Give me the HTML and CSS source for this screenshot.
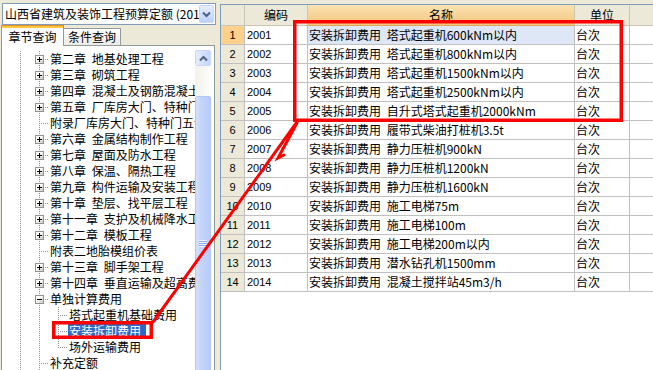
FILE: index.html
```html
<!DOCTYPE html>
<html lang="zh">
<head>
<meta charset="utf-8">
<title>预算定额</title>
<link rel="stylesheet" href="styles.css">
</head>
<body>
<div class="app">
  <aside class="left">
    <div class="combo">
      <span class="combo-text">山西省建筑及装饰工程预算定额 (2011)</span>
      <span class="combo-btn"><svg width="9" height="7" viewBox="0 0 9 7"><path d="M1 1.5 L4.5 5 L8 1.5" fill="none" stroke="#4D6185" stroke-width="2"/></svg></span>
    </div>
    <div class="tabs">
      <div class="tab active">章节查询</div>
      <div class="tab">条件查询</div>
      <div class="tab-fill"></div>
    </div>
    <div class="tabpage">
      <div class="tree">
        <div class="node"><span class="pad"></span><span class="g v"></span><span class="g tee"><span class="box plus"></span></span><span class="label">第二章 地基处理工程</span></div>
        <div class="node"><span class="pad"></span><span class="g v"></span><span class="g tee"><span class="box plus"></span></span><span class="label">第三章 砌筑工程</span></div>
        <div class="node"><span class="pad"></span><span class="g v"></span><span class="g tee"><span class="box plus"></span></span><span class="label">第四章 混凝土及钢筋混凝土工程</span></div>
        <div class="node"><span class="pad"></span><span class="g v"></span><span class="g tee"><span class="box plus"></span></span><span class="label">第五章 厂库房大门、特种门、木结构工程</span></div>
        <div class="node"><span class="pad"></span><span class="g v"></span><span class="g tee"></span><span class="label">附录厂库房大门、特种门五金表</span></div>
        <div class="node"><span class="pad"></span><span class="g v"></span><span class="g tee"><span class="box plus"></span></span><span class="label">第六章 金属结构制作工程</span></div>
        <div class="node"><span class="pad"></span><span class="g v"></span><span class="g tee"><span class="box plus"></span></span><span class="label">第七章 屋面及防水工程</span></div>
        <div class="node"><span class="pad"></span><span class="g v"></span><span class="g tee"><span class="box plus"></span></span><span class="label">第八章 保温、隔热工程</span></div>
        <div class="node"><span class="pad"></span><span class="g v"></span><span class="g tee"><span class="box plus"></span></span><span class="label">第九章 构件运输及安装工程</span></div>
        <div class="node"><span class="pad"></span><span class="g v"></span><span class="g tee"><span class="box plus"></span></span><span class="label">第十章 垫层、找平层工程</span></div>
        <div class="node"><span class="pad"></span><span class="g v"></span><span class="g tee"><span class="box plus"></span></span><span class="label">第十一章 支护及机械降水工程</span></div>
        <div class="node"><span class="pad"></span><span class="g v"></span><span class="g tee"><span class="box plus"></span></span><span class="label">第十二章 模板工程</span></div>
        <div class="node"><span class="pad"></span><span class="g v"></span><span class="g tee"></span><span class="label">附表二地胎模组价表</span></div>
        <div class="node"><span class="pad"></span><span class="g v"></span><span class="g tee"><span class="box plus"></span></span><span class="label">第十三章 脚手架工程</span></div>
        <div class="node"><span class="pad"></span><span class="g v"></span><span class="g tee"><span class="box plus"></span></span><span class="label">第十四章 垂直运输及超高费</span></div>
        <div class="node"><span class="pad"></span><span class="g v"></span><span class="g tee"><span class="box minus"></span></span><span class="label">单独计算费用</span></div>
        <div class="node"><span class="pad"></span><span class="g v"></span><span class="g v"></span><span class="g tee"></span><span class="label">塔式起重机基础费用</span></div>
        <div class="node"><span class="pad"></span><span class="g v"></span><span class="g v"></span><span class="g tee"></span><span class="label sel">安装拆卸费用</span></div>
        <div class="node"><span class="pad"></span><span class="g v"></span><span class="g v"></span><span class="g ell"></span><span class="label">场外运输费用</span></div>
        <div class="node"><span class="pad"></span><span class="g v"></span><span class="g tee"></span><span class="label">补充定额</span></div>
      </div>
      <div class="vscroll">
        <div class="sb-up"><svg width="9" height="7" viewBox="0 0 9 7"><path d="M1 5.5 L4.5 2 L8 5.5" fill="none" stroke="#4D6185" stroke-width="2"/></svg></div>
        <div class="sb-track"></div>
        <div class="sb-thumb"><span class="grip"></span></div>
      </div>
    </div>
  </aside>
  <div class="splitter"></div>
  <section class="grid">
    <div class="row head">
      <div class="c num"></div><div class="c code">编码</div><div class="c name sortcol">名称</div><div class="c unit">单位</div><div class="c rest"></div>
    </div>
    <div class="row"><div class="c num cur">1</div><div class="c code">2001</div><div class="c name curcell">安装拆卸费用 塔式起重机600kNm以内</div><div class="c unit">台次</div><div class="c rest"></div></div>
    <div class="row"><div class="c num">2</div><div class="c code">2002</div><div class="c name">安装拆卸费用 塔式起重机800kNm以内</div><div class="c unit">台次</div><div class="c rest"></div></div>
    <div class="row"><div class="c num">3</div><div class="c code">2003</div><div class="c name">安装拆卸费用 塔式起重机1500kNm以内</div><div class="c unit">台次</div><div class="c rest"></div></div>
    <div class="row"><div class="c num">4</div><div class="c code">2004</div><div class="c name">安装拆卸费用 塔式起重机2500kNm以内</div><div class="c unit">台次</div><div class="c rest"></div></div>
    <div class="row"><div class="c num">5</div><div class="c code">2005</div><div class="c name">安装拆卸费用 自升式塔式起重机2000kNm</div><div class="c unit">台次</div><div class="c rest"></div></div>
    <div class="row"><div class="c num">6</div><div class="c code">2006</div><div class="c name">安装拆卸费用 履带式柴油打桩机3.5t</div><div class="c unit">台次</div><div class="c rest"></div></div>
    <div class="row"><div class="c num">7</div><div class="c code">2007</div><div class="c name">安装拆卸费用 静力压桩机900kN</div><div class="c unit">台次</div><div class="c rest"></div></div>
    <div class="row"><div class="c num">8</div><div class="c code">2008</div><div class="c name">安装拆卸费用 静力压桩机1200kN</div><div class="c unit">台次</div><div class="c rest"></div></div>
    <div class="row"><div class="c num">9</div><div class="c code">2009</div><div class="c name">安装拆卸费用 静力压桩机1600kN</div><div class="c unit">台次</div><div class="c rest"></div></div>
    <div class="row"><div class="c num">10</div><div class="c code">2010</div><div class="c name">安装拆卸费用 施工电梯75m</div><div class="c unit">台次</div><div class="c rest"></div></div>
    <div class="row"><div class="c num">11</div><div class="c code">2011</div><div class="c name">安装拆卸费用 施工电梯100m</div><div class="c unit">台次</div><div class="c rest"></div></div>
    <div class="row"><div class="c num">12</div><div class="c code">2012</div><div class="c name">安装拆卸费用 施工电梯200m以内</div><div class="c unit">台次</div><div class="c rest"></div></div>
    <div class="row"><div class="c num">13</div><div class="c code">2013</div><div class="c name">安装拆卸费用 潜水钻孔机1500mm</div><div class="c unit">台次</div><div class="c rest"></div></div>
    <div class="row"><div class="c num">14</div><div class="c code">2014</div><div class="c name">安装拆卸费用 混凝土搅拌站45m3/h</div><div class="c unit">台次</div><div class="c rest"></div></div>
  </section>
</div>
<svg class="marks" width="653" height="370" viewBox="0 0 653 370">
  <g fill="none" stroke="#ff0000" stroke-width="3.5">
    <rect x="294.75" y="21.75" width="326.5" height="98.5"/>
    <rect x="53.75" y="322.75" width="97.5" height="14.5"/>
  </g>
  <g fill="none" stroke="#ff0000" stroke-width="3" stroke-linecap="round">
    <path d="M153 322 L297 122"/>
    <path d="M297 123 L278 158 L284 155"/>
  </g>
</svg>
</body>
</html>
```
FILE: styles.css
```css
html, body {
  margin: 0;
  padding: 0;
}
body {
  width: 653px;
  height: 370px;
  overflow: hidden;
  position: relative;
  background: #ECE9D8;
  font-family: "Noto Sans CJK SC", "Noto Sans", sans-serif;
  font-size: 12px;
  color: #000;
}
.app {
  display: flex;
  height: 370px;
}

/* ---------- left panel ---------- */
.left {
  width: 216px;
  flex: none;
  display: flex;
  flex-direction: column;
  padding-top: 3px;
  box-sizing: border-box;
}
.combo {
  margin-left: 2px;
  width: 214px;
  height: 22px;
  box-sizing: border-box;
  border: 1px solid #7F9DB9;
  background: #fff;
  padding: 1px;
  display: flex;
  align-items: center;
}
.combo-text {
  flex: 1;
  min-width: 0;
  overflow: hidden;
  white-space: nowrap;
  padding-left: 1px;
  line-height: 18px;
}
.combo-btn {
  width: 15px;
  height: 18px;
  flex: none;
  box-sizing: border-box;
  border: 1px solid #C3D3FD;
  border-radius: 2px;
  background: linear-gradient(to bottom, #E6EEFF, #BCD0FA);
  display: flex;
  align-items: center;
  justify-content: center;
}
.tabs {
  display: flex;
  align-items: flex-end;
  height: 21px;
  margin-left: 1px;
  width: 214px;
}
.tab {
  box-sizing: border-box;
  text-align: center;
  white-space: nowrap;
  flex: none;
}
.tab.active {
  width: 63px;
  height: 21px;
  border: 1px solid #919B9C;
  border-bottom: none;
  border-top: 1px solid #E68B2C;
  box-shadow: inset 0 2px 0 #FFC83C;
  background: #FCFCFE;
  padding-top: 2px;
  line-height: 17px;
}
.tab:not(.active) {
  width: 57px;
  height: 18px;
  border: 1px solid #919B9C;
  border-left: none;
  background: linear-gradient(to bottom, #FFFFFF, #ECEBE6);
  line-height: 16px;
}
.tab-fill {
  flex: 1;
  border-bottom: 1px solid #919B9C;
}
.tabpage {
  flex: 1;
  min-height: 0;
  margin-left: 1px;
  width: 214px;
  box-sizing: border-box;
  border-left: 1px solid #919B9C;
  border-right: 1px solid #919B9C;
  background: #fff;
  padding: 4px 3px 0 1px;
  display: flex;
  overflow: hidden;
}
.tree {
  flex: 1;
  min-width: 0;
  overflow: hidden;
  padding-top: 1px;
}
.node {
  display: flex;
  height: 16px;
  white-space: nowrap;
}
.pad {
  width: 8px;
  flex: none;
}
.g {
  width: 19px;
  height: 16px;
  flex: none;
}
.v {
  background: repeating-linear-gradient(to bottom, #8C8C8C 0 1px, transparent 1px 2px) 9px 0 / 1px 16px no-repeat;
}
.tee {
  background:
    repeating-linear-gradient(to right, #8C8C8C 0 1px, transparent 1px 2px) 11px 8px / 8px 1px no-repeat,
    repeating-linear-gradient(to bottom, #8C8C8C 0 1px, transparent 1px 2px) 9px 0 / 1px 16px no-repeat;
}
.ell {
  background:
    repeating-linear-gradient(to right, #8C8C8C 0 1px, transparent 1px 2px) 11px 8px / 8px 1px no-repeat,
    repeating-linear-gradient(to bottom, #8C8C8C 0 1px, transparent 1px 2px) 9px 0 / 1px 9px no-repeat;
}
.box {
  display: block;
  width: 9px;
  height: 9px;
  box-sizing: border-box;
  margin: 4px 0 0 5px;
  border: 1px solid #8F9193;
}
.box.plus {
  background:
    linear-gradient(#000, #000) center / 5px 1px no-repeat,
    linear-gradient(#000, #000) center / 1px 5px no-repeat,
    linear-gradient(135deg, #FFFFFF 35%, #C9C8BA);
}
.box.minus {
  background:
    linear-gradient(#000, #000) center / 5px 1px no-repeat,
    linear-gradient(135deg, #FFFFFF 35%, #C9C8BA);
}
.label {
  padding: 0 1px;
  line-height: 16px;
  word-spacing: 3px;
}
.label.sel {
  background: #316AC5;
  color: #fff;
  padding-right: 5px;
  height: 15px;
  line-height: 15px;
}
.vscroll {
  width: 16px;
  flex: none;
  display: flex;
  flex-direction: column;
}
.sb-up {
  height: 16px;
  flex: none;
  box-sizing: border-box;
  border: 1px solid #C8D6FB;
  border-radius: 2px;
  background: linear-gradient(to right, #E4ECFE, #C4D5FC);
  display: flex;
  align-items: center;
  justify-content: center;
}
.sb-track {
  height: 30px;
  flex: none;
  background: linear-gradient(to right, #F3F1EA, #FDFDFA);
}
.sb-thumb {
  height: 294px;
  flex: none;
  box-sizing: border-box;
  border: 1px solid #B3C7F5;
  border-radius: 2px;
  background: linear-gradient(to right, #D3E0FD, #C3D4FB 40%, #B9CCF9);
  display: flex;
  align-items: center;
  justify-content: center;
}
.grip {
  width: 8px;
  height: 7px;
  background: repeating-linear-gradient(to bottom, #EEF4FE 0 1px, #8CAEF3 1px 2px);
}
.splitter {
  width: 4px;
  flex: none;
}

/* ---------- grid ---------- */
.grid {
  flex: 1;
  min-width: 0;
  margin-top: 4px;
  border-top: 1px solid #7F9DB9;
  border-left: 1px solid #7F9DB9;
  background: #fff;
  overflow: hidden;
}
.row {
  display: flex;
  height: 19px;
}
.row.head {
  height: 21px;
}
.c {
  box-sizing: border-box;
  height: 100%;
  border-right: 1px solid #C0C0C0;
  border-bottom: 1px solid #C0C0C0;
  white-space: nowrap;
  overflow: hidden;
  line-height: 18px;
  flex: none;
}
.head .c {
  background: #ECE9D8;
  text-align: center;
  line-height: 20px;
  border-color: #C9C6B6;
}
.head .c.sortcol {
  background: linear-gradient(to bottom, #FBE2B2, #F3C67E);
  border-bottom-color: #E3A654;
}
.c.num {
  width: 24px;
  background: #ECE9D8;
  text-align: center;
  font-family: "Liberation Sans", Arial, sans-serif;
  font-size: 11px;
}
.c.num.cur {
  background: #FCD18C;
}
.c.code {
  width: 63px;
  padding-left: 2px;
  font-family: "Liberation Sans", Arial, sans-serif;
  font-size: 11px;
}
.head .c.code,
.head .c.name,
.head .c.unit {
  font-family: "Noto Sans CJK SC", sans-serif;
  font-size: 12px;
  padding-left: 0;
}
.c.name {
  width: 267px;
  padding-left: 1px;
  word-spacing: 3px;
}
.c.name.curcell {
  background: #DEE7F5;
}
.c.unit {
  width: 55px;
  padding-left: 1px;
}
.c.rest {
  flex: 1;
  border-right: none;
}

/* ---------- annotation overlay ---------- */
.marks {
  position: absolute;
  left: 0;
  top: 0;
  pointer-events: none;
}
```
